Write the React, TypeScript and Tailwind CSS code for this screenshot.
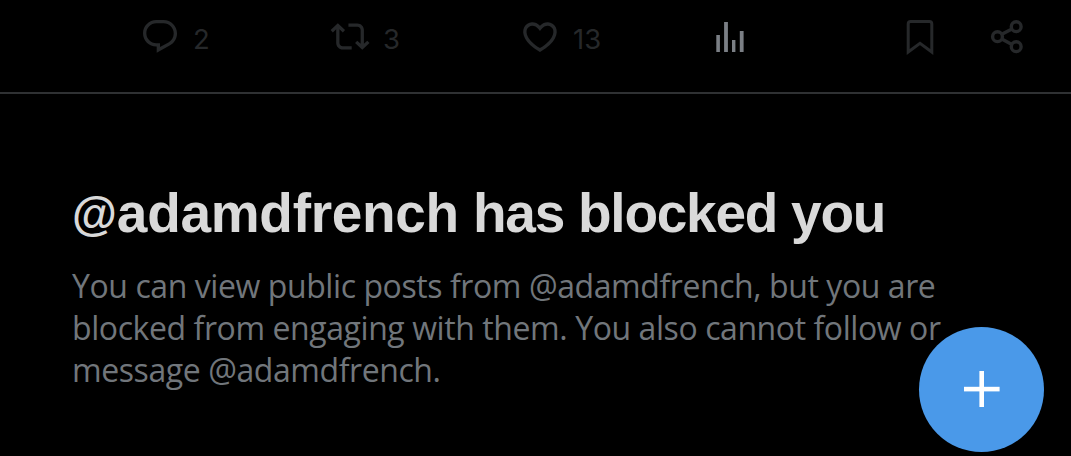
import React from "react";

const ICON_COLOR = "#26282a";

function ReplyIcon() {
  return (
    <svg width="44" height="44" viewBox="0 0 44 44" fill={ICON_COLOR} className="shrink-0">
      <g transform="translate(2.1 0.7) scale(1.66)">
        <path d="M1.751 10c0-4.42 3.584-8 8.005-8h4.366c4.49 0 8.129 3.64 8.129 8.13 0 2.96-1.607 5.68-4.196 7.11l-8.054 4.46v-3.69h-.067c-4.49.1-8.183-3.51-8.183-8.01zm8.005-6c-3.317 0-6.005 2.69-6.005 6 0 3.37 2.77 6.08 6.138 6.01l.351-.01h1.761v2.3l5.087-2.81c1.951-1.08 3.163-3.13 3.163-5.36 0-3.39-2.744-6.13-6.129-6.13H9.756z" />
      </g>
    </svg>
  );
}

function RepostIcon() {
  return (
    <svg width="44" height="44" viewBox="0 0 44 44" fill={ICON_COLOR} className="shrink-0">
      <g transform="translate(2.5 1) scale(1.63)">
        <path d="M4.5 3.88l4.432 4.14-1.364 1.46L5.5 7.55V16c0 1.1.896 2 2 2H13v2H7.5c-2.209 0-4-1.79-4-4V7.55L1.432 9.48.068 8.02 4.5 3.88zM16.5 6H11V4h5.5c2.209 0 4 1.79 4 4v8.45l2.068-1.93 1.364 1.46-4.432 4.14-4.432-4.14 1.364-1.46 2.068 1.93V8c0-1.1-.896-2-2-2z" />
      </g>
    </svg>
  );
}

function HeartIcon() {
  return (
    <svg width="44" height="44" viewBox="0 0 44 44" fill={ICON_COLOR} className="shrink-0">
      <g transform="translate(1.8 0.4) scale(1.68)">
        <path d="M16.697 5.5c-1.222-.06-2.679.51-3.89 2.16l-.805 1.09-.806-1.09C9.984 6.01 8.526 5.44 7.304 5.5c-1.243.07-2.349.78-2.91 1.91-.552 1.12-.633 2.78.479 4.82 1.074 1.97 3.257 4.27 7.129 6.61 3.87-2.34 6.052-4.64 7.126-6.61 1.111-2.04 1.03-3.7.477-4.82-.561-1.13-1.666-1.84-2.908-1.91zm4.187 7.69c-1.351 2.48-4.001 5.12-8.379 7.67l-.503.3-.504-.3c-4.379-2.55-7.029-5.19-8.382-7.67-1.36-2.5-1.41-4.86-.514-6.67.887-1.79 2.647-2.91 4.601-3.01 1.651-.09 3.368.56 4.798 2.01 1.429-1.45 3.146-2.1 4.796-2.01 1.954.1 3.714 1.22 4.601 3.01.896 1.81.846 4.17-.514 6.67z" />
      </g>
    </svg>
  );
}

function ViewsIcon() {
  return (
    <svg width="44" height="44" viewBox="0 0 44 44" fill="#7b7f85" className="shrink-0">
      <rect x="8.3" y="19" width="3.6" height="17" />
      <rect x="16.1" y="6" width="3.8" height="30" />
      <rect x="24" y="24" width="3.4" height="12" />
      <rect x="31.8" y="15" width="3.8" height="21" />
    </svg>
  );
}

function BookmarkIcon() {
  return (
    <svg width="44" height="44" viewBox="0 0 44 44" fill="none" stroke={ICON_COLOR} strokeWidth="3" className="shrink-0">
      <path d="M10.2 36V8Q10.2 5.6 12.6 5.6H31.4Q33.8 5.6 33.8 8V36L22 27.4Z" />
    </svg>
  );
}

function ShareIcon() {
  return (
    <svg width="44" height="44" viewBox="0 0 44 44" fill="none" stroke={ICON_COLOR} strokeWidth="3.4" className="shrink-0">
      <circle cx="12.5" cy="20.7" r="4.9" />
      <circle cx="31.2" cy="10.7" r="4.9" />
      <circle cx="31.2" cy="30.7" r="4.9" />
      <path d="M16.8 18.3L26.9 12.9M16.8 23.1L26.9 28.5" />
    </svg>
  );
}

const actions = [
  { name: "Reply", icon: <ReplyIcon />, count: "2" },
  { name: "Repost", icon: <RepostIcon />, count: "3" },
  { name: "Like", icon: <HeartIcon />, count: "13" },
  { name: "Views", icon: <ViewsIcon />, count: "" },
];

function App() {
  return (
    <div className="relative h-[456px] w-[1071px] overflow-hidden bg-black">
      {/* Post actions */}
      <div className="flex h-[94px] items-start border-b-2 border-[#2f3133] pt-4 pl-[138px]">
        {actions.map((action) => (
          <button
            key={action.name}
            aria-label={action.name}
            className="flex h-[44px] w-[190px] items-center gap-[11px]"
          >
            {action.icon}
            <span className="pt-px font-['Inter',sans-serif] text-[27.5px] leading-[40px] font-normal text-[#26282a]">
              {action.count}
            </span>
          </button>
        ))}
        <button aria-label="Bookmark" className="w-[87px]">
          <BookmarkIcon />
        </button>
        <button aria-label="Share">
          <ShareIcon />
        </button>
      </div>

      {/* Blocked notice */}
      <div className="pt-[83px] pl-[72px]">
        <h1 className="h-[72px] font-['Liberation_Sans',sans-serif] text-[55px] leading-[72px] font-bold tracking-[-1.25px] whitespace-nowrap text-[#d9d9d9]">
          <span className="align-[2px] text-[46px] leading-none tracking-normal">@</span>
          <span className="tracking-[-0.3px]">adamdfrench</span> has blocked you
        </h1>
        <p className="mt-[16px] font-['Open_Sans',sans-serif] text-[32px] leading-[42px] tracking-[-0.42px] whitespace-nowrap text-[#71767b]">
          You can view public posts from @adamdfrench, but you are
          <br />
          blocked from engaging with them. You also cannot follow or
          <br />
          message @adamdfrench.
        </p>
      </div>

      <button
        aria-label="New post"
        className="absolute top-[326.5px] left-[919px] flex h-[125px] w-[125px] items-center justify-center rounded-full bg-[#4a99e9]"
      >
        <svg width="36" height="36" viewBox="0 0 36 36" fill="white">
          <rect x="-0.4" y="15.8" width="36" height="4.6" />
          <rect x="15.4" y="0" width="4.6" height="36" />
        </svg>
      </button>
    </div>
  );
}

export default App;
